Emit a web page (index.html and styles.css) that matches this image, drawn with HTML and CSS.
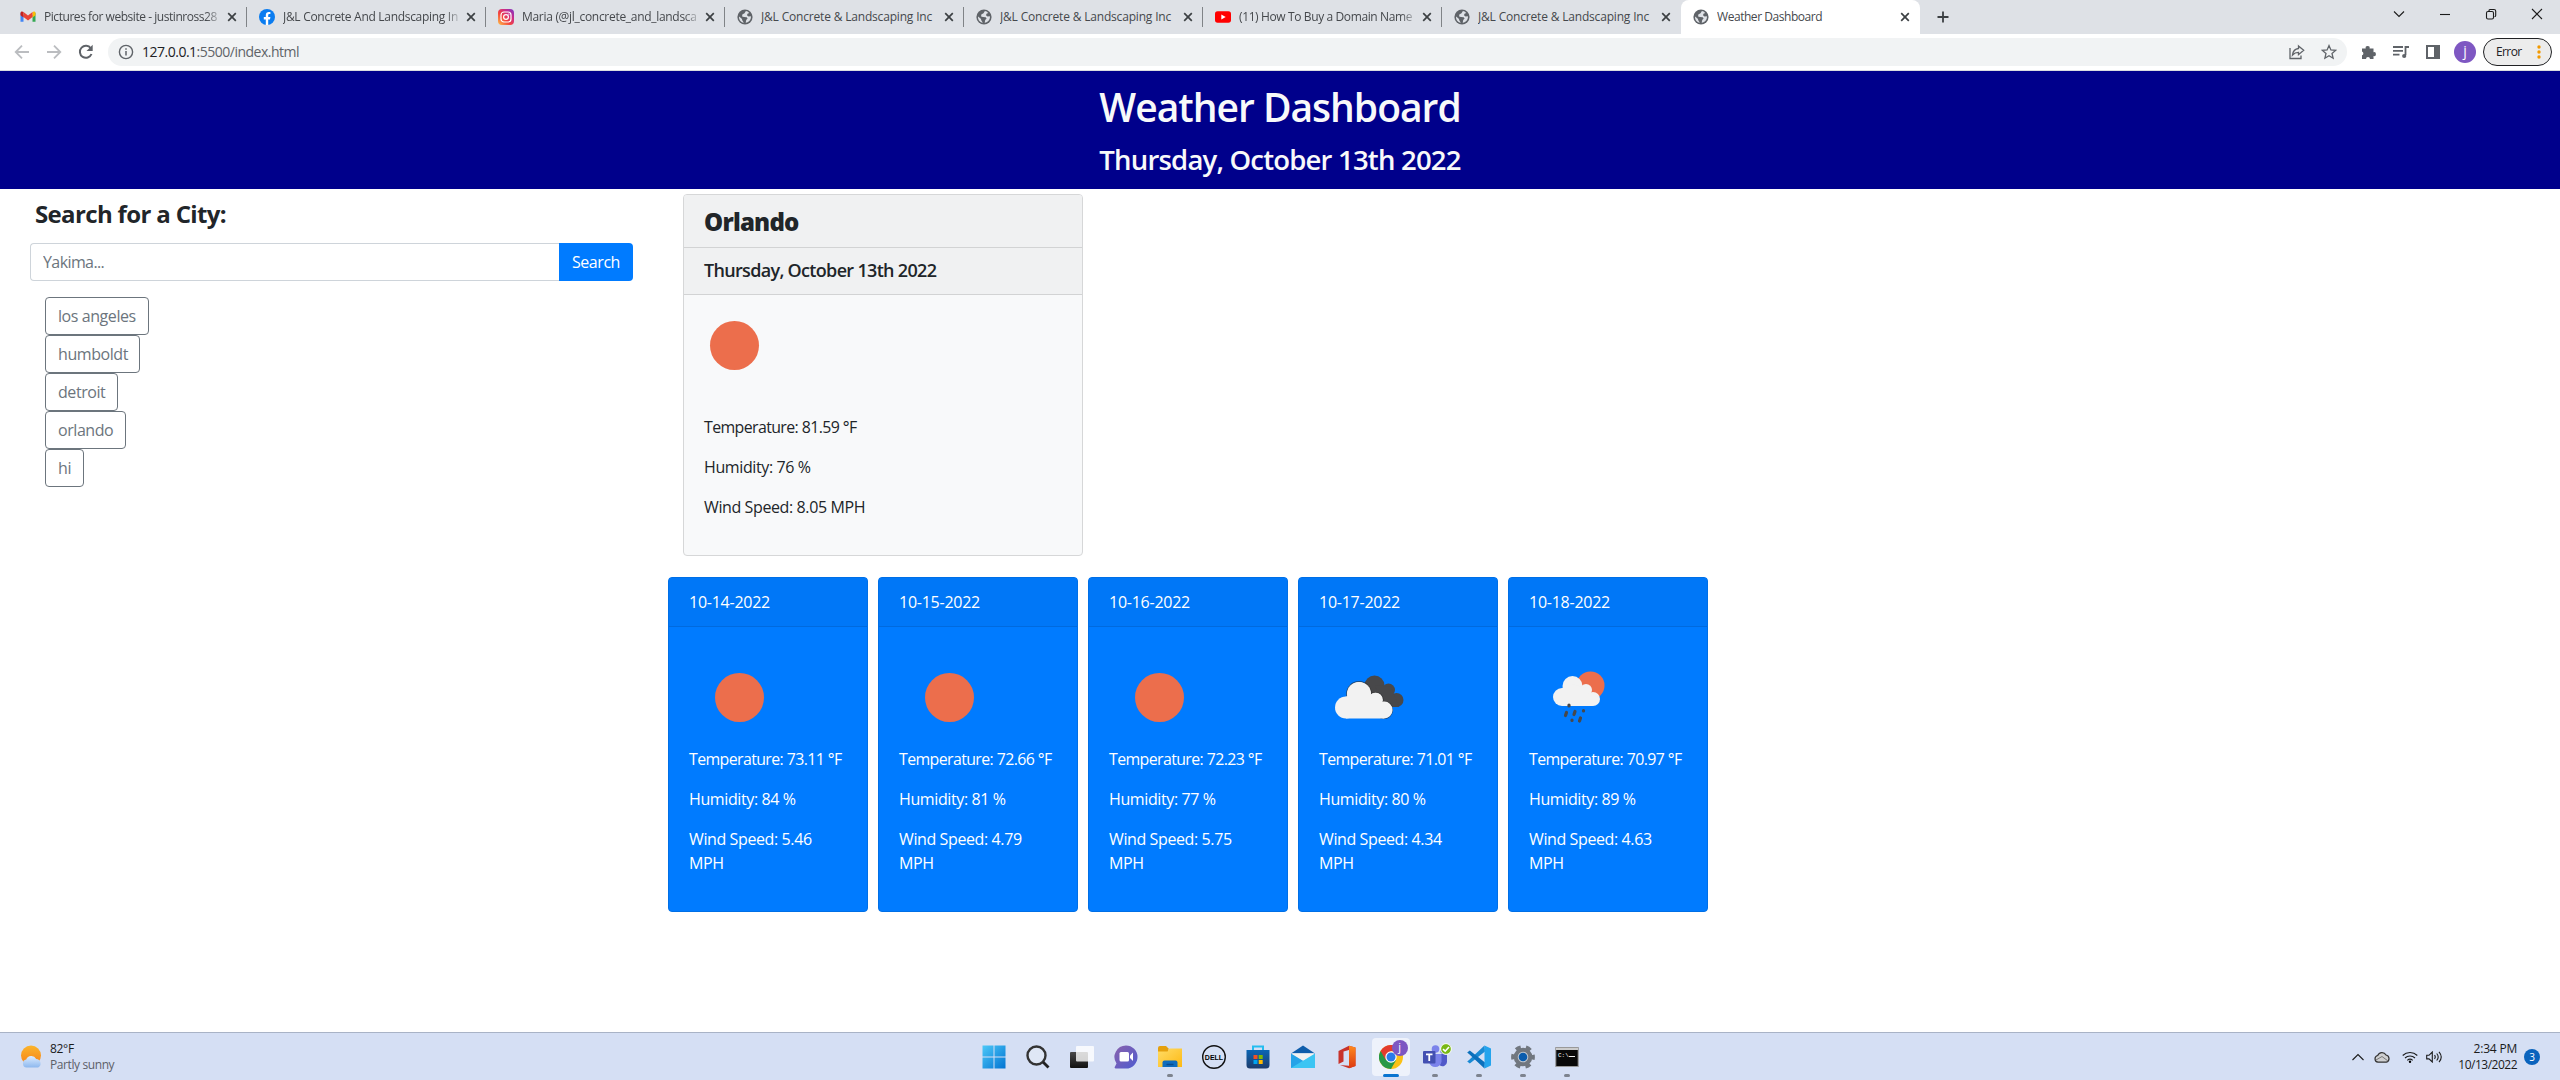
FILE: index.html
```html
<!DOCTYPE html>
<html lang="en">
<head>
<meta charset="utf-8">
<title>Weather Dashboard</title>
<link rel="stylesheet" href="styles.css">
</head>
<body>
<svg class="defs" width="0" height="0">
  <defs>
    <linearGradient id="win" x1="0" y1="0" x2="1" y2="1"><stop offset="0" stop-color="#4cc8f8"/><stop offset="1" stop-color="#0274d2"/></linearGradient>
    <linearGradient id="insta" x1="0" y1="1" x2="1" y2="0"><stop offset="0" stop-color="#fdc24a"/><stop offset=".4" stop-color="#f4443e"/><stop offset=".7" stop-color="#c92c8c"/><stop offset="1" stop-color="#7638c8"/></linearGradient>
    <linearGradient id="sunfill" x1="0" y1="0" x2="0" y2="1"><stop offset="0" stop-color="#fbb52c"/><stop offset="1" stop-color="#f57f17"/></linearGradient>
    <linearGradient id="cloudfill" x1="0" y1="0" x2="0" y2="1"><stop offset="0" stop-color="#dcecff"/><stop offset="1" stop-color="#8db8ee"/></linearGradient>
    <linearGradient id="folder" x1="0" y1="0" x2="1" y2="1"><stop offset="0" stop-color="#ffdc67"/><stop offset="1" stop-color="#fdb913"/></linearGradient>
    <linearGradient id="store" x1="0" y1="0" x2="0" y2="1"><stop offset="0" stop-color="#0a66b5"/><stop offset="1" stop-color="#1d3c6c"/></linearGradient>
    <linearGradient id="office" x1="0" y1="0" x2="0" y2="1"><stop offset="0" stop-color="#ff8a1d"/><stop offset="1" stop-color="#dc3912"/></linearGradient>
    <linearGradient id="chat" x1="0" y1="0" x2="1" y2="1"><stop offset="0" stop-color="#8a62ac"/><stop offset="1" stop-color="#4e5bd0"/></linearGradient>
    <linearGradient id="task" x1="0" y1="0" x2="0" y2="1"><stop offset="0" stop-color="#4a4a4a"/><stop offset="1" stop-color="#111"/></linearGradient>
    <symbol id="globe" viewBox="0 0 16 16"><circle cx="8" cy="8" r="7.600" fill="#5f6368"/><path d="M8.900 2.100 7.500 4.300 5.300 5.500 5.100 7.400 7 8 9.700 8.300 10.600 9.500 9.200 11 8.700 13.700C12.300 13.300 14.300 10.500 13.900 7.300L11.500 7.500 10 6.200 10.500 4.700 12.200 4.100C11.300 2.900 10.100 2.200 8.900 2.100zM2.100 7.500 4.800 9.800 5.400 11.500 6.800 13.700C3.500 13.200 1.600 10.400 2.100 7.500z" fill="#dee1e6"/></symbol>
    <symbol id="close" viewBox="0 0 10 10"><path d="M1.200 1.200 8.800 8.800M8.800 1.200 1.200 8.800" stroke="#3c4043" stroke-width="1.700"/></symbol>
  </defs>
</svg>

<div class="browser">
  <div class="tabs">
    <div class="tab"><svg class="fav" viewBox="0 0 16 16"><path d="M.5 3.500v9.300h3V6.500z" fill="#4285f4"/><path d="M15.500 3.500v9.300h-3V6.500z" fill="#34a853"/><path d="M12.500 4v4.500l3-2.300V4c0-1.500-1.700-2-3-1z" fill="#fbbc04"/><path d="M3.500 3 8 6.500 12.500 3v5L8 11.500 3.500 8z" fill="#ea4335"/><path d="M.5 4v2.200l3 2.300V3C2.200 2 .5 2.500.5 4z" fill="#c5221f"/></svg><span class="tab-title fade mail">Pictures for website - justinross28</span><svg class="x"><use href="#close"/></svg></div>
    <div class="tab"><svg class="fav" viewBox="0 0 16 16"><circle cx="8" cy="8" r="8" fill="#0a7cf0"/><path d="M6.800 16v-5.600h-2V8h2V6.300c0-2.100 1.200-3.200 3-3.200.8 0 1.600.1 1.600.1v1.900h-1c-.9 0-1.200.6-1.200 1.200V8h2.200l-.4 2.400H9.200V16z" fill="#fff"/></svg><span class="tab-title fade">J&amp;L Concrete And Landscaping Inc</span><svg class="x"><use href="#close"/></svg></div>
    <div class="tab"><svg class="fav" viewBox="0 0 16 16"><rect width="16" height="16" rx="4" fill="url(#insta)"/><rect x="3" y="3" width="10" height="10" rx="3" fill="none" stroke="#fff" stroke-width="1.200"/><circle cx="8" cy="8" r="2.400" fill="none" stroke="#fff" stroke-width="1.200"/><circle cx="10.900" cy="5.100" r=".7" fill="#fff"/></svg><span class="tab-title fade">Maria (@jl_concrete_and_landsca</span><svg class="x"><use href="#close"/></svg></div>
    <div class="tab"><svg class="fav"><use href="#globe"/></svg><span class="tab-title">J&amp;L Concrete &amp; Landscaping Inc</span><svg class="x"><use href="#close"/></svg></div>
    <div class="tab"><svg class="fav"><use href="#globe"/></svg><span class="tab-title">J&amp;L Concrete &amp; Landscaping Inc</span><svg class="x"><use href="#close"/></svg></div>
    <div class="tab"><svg class="fav" viewBox="0 0 16 16"><rect y="2.300" width="16" height="11.400" rx="2.600" fill="#f00"/><path d="M6.300 5.500v5L10.700 8z" fill="#fff"/></svg><span class="tab-title fade video">(11) How To Buy a Domain Name</span><svg class="x"><use href="#close"/></svg></div>
    <div class="tab last"><svg class="fav"><use href="#globe"/></svg><span class="tab-title">J&amp;L Concrete &amp; Landscaping Inc</span><svg class="x"><use href="#close"/></svg></div>
    <div class="tab active"><svg class="fav"><use href="#globe"/></svg><span class="tab-title">Weather Dashboard</span><svg class="x"><use href="#close"/></svg></div>
    <svg class="new-tab" viewBox="0 0 12 12"><path d="M6 .5v11M.5 6h11" stroke="#3c4043" stroke-width="1.800"/></svg>
    <div class="window-buttons">
      <svg viewBox="0 0 12 12"><path d="M1 3.500 6 8.500 11 3.500" class="w"/></svg>
      <svg viewBox="0 0 12 12"><path d="M1 6.500h10" class="w"/></svg>
      <svg viewBox="0 0 12 12"><rect x="1.500" y="3.500" width="7" height="7.500" rx="1.500" class="w"/><path d="M4 3V2.500Q4 1.500 5 1.500H9Q10.700 1.500 10.700 3V7.500Q10.700 8.700 9.500 8.700" class="w"/></svg>
      <svg viewBox="0 0 12 12"><path d="M1 1 11 11M11 1 1 11" class="w"/></svg>
    </div>
  </div>
  <div class="toolbar">
    <svg class="nav" viewBox="0 0 16 16"><path d="M15 8H2M8 1.700 1.700 8 8 14.300" stroke="#bbbdc0"/></svg>
    <svg class="nav" viewBox="0 0 16 16"><path d="M1 8h13M8 1.700 14.300 8 8 14.300" stroke="#bbbdc0"/></svg>
    <svg class="nav" viewBox="0 0 16 16"><path d="M13.500 10A6 6 0 1 1 12.800 4.300" stroke="#5f6368" stroke-width="2"/><path d="M14.700.8V7H8.500z" fill="#5f6368" stroke="none"/></svg>
    <div class="address">
      <svg class="info" viewBox="0 0 16 16"><circle cx="8" cy="8" r="6.600" fill="none" stroke="#5f6368" stroke-width="1.400"/><path d="M8 7v4.600M8 4.300v1.500" stroke="#5f6368" stroke-width="1.500"/></svg>
      <span class="url"><b>127.0.0.1</b>:5500/index.html</span>
      <svg class="share" viewBox="0 0 16 16"><path d="M1 4v10.500h11v-3M9.500 2 14.700 6.300 9.500 10.700V8.300C6.500 8.300 5 9.300 3.500 11 4 7 6 4.800 9.500 4.500z" class="t"/></svg>
      <svg class="star" viewBox="0 0 16 16"><path d="M8 1.600 9.900 6 14.600 6.400 11 9.500 12.100 14.200 8 11.700 3.900 14.200 5 9.500 1.400 6.400 6.100 6z" class="t"/></svg>
    </div>
    <div class="extensions">
      <svg viewBox="0 0 16 16"><path d="M1 4.500h3.700a2 2 0 1 1 3.900 0H12.500v3.700a2 2 0 1 1 0 3.900V15H9a2 2 0 0 0-4 0H1v-3.700a2 2 0 0 0 0-3.800z" fill="#5f6368"/></svg>
      <svg viewBox="0 0 16 16"><path d="M0 3h10M0 6.800h10M0 10.600h6.500M12.500 11V3h3.500" class="q"/><circle cx="11.200" cy="12" r="2.100" fill="#5f6368"/></svg>
      <svg viewBox="0 0 16 16"><path d="M1 1h14v14H1zM3 3v10h6V3z" fill="#5f6368" fill-rule="evenodd"/></svg>
      <span class="avatar">j</span>
      <span class="error">Error<svg viewBox="0 0 4 14"><circle cx="2" cy="2" r="1.700"/><circle cx="2" cy="7" r="1.700"/><circle cx="2" cy="12" r="1.700"/></svg></span>
    </div>
  </div>
</div>

<header class="hero">
  <h1>Weather Dashboard</h1>
  <h3>Thursday, October 13th 2022</h3>
</header>

<main class="page">
  <aside class="sidebar">
    <h2 class="search-title">Search for a City:</h2>
    <div class="search"><input type="text" placeholder="Yakima..."><button class="go">Search</button></div>
    <div class="history">
      <button class="b1">los angeles</button>
      <button class="b2">humboldt</button>
      <button class="b3">detroit</button>
      <button class="b4">orlando</button>
      <button class="b5">hi</button>
    </div>
  </aside>
  <section class="results">
    <article class="today">
      <h2 class="city">Orlando</h2>
      <h3 class="date">Thursday, October 13th 2022</h3>
      <div class="today-body">
        <svg class="weather" viewBox="0 0 100 100"><circle cx="50.500" cy="50.500" r="24.500" fill="#ec6e4c"/></svg>
        <p class="degrees">Temperature: 81.59 °F</p>
        <p>Humidity: 76 %</p>
        <p>Wind Speed: 8.05 MPH</p>
      </div>
    </article>
    <div class="forecast">
      <article class="day"><div class="day-head">10-14-2022</div><div class="day-body"><svg class="weather" viewBox="0 0 100 100"><circle cx="50.500" cy="50.500" r="24.500" fill="#ec6e4c"/></svg><p class="degrees">Temperature: 73.11 °F</p><p>Humidity: 84 %</p><p>Wind Speed: 5.46<br>MPH</p></div></article>
      <article class="day"><div class="day-head">10-15-2022</div><div class="day-body"><svg class="weather" viewBox="0 0 100 100"><circle cx="50.500" cy="50.500" r="24.500" fill="#ec6e4c"/></svg><p class="degrees">Temperature: 72.66 °F</p><p>Humidity: 81 %</p><p>Wind Speed: 4.79<br>MPH</p></div></article>
      <article class="day"><div class="day-head">10-16-2022</div><div class="day-body"><svg class="weather" viewBox="0 0 100 100"><circle cx="50.500" cy="50.500" r="24.500" fill="#ec6e4c"/></svg><p class="degrees">Temperature: 72.23 °F</p><p>Humidity: 77 %</p><p>Wind Speed: 5.75<br>MPH</p></div></article>
      <article class="day"><div class="day-head">10-17-2022</div><div class="day-body"><svg class="weather" viewBox="0 0 100 100">
        <g fill="#48484a"><circle cx="55.500" cy="38.500" r="10"/><circle cx="69.500" cy="43" r="6.500"/><circle cx="77.500" cy="53" r="7"/><path d="M56 38 72 40 80 60H62z"/></g>
        <g fill="#f2f2f2" stroke="#1f1f22" stroke-opacity=".6" stroke-width="1.200"><circle cx="40" cy="47" r="12.300"/><circle cx="56.500" cy="53" r="7.500"/><circle cx="65" cy="63" r="8.500"/></g>
        <g fill="#f2f2f2"><circle cx="40" cy="47" r="12"/><circle cx="56.500" cy="53" r="7.300"/><circle cx="27" cy="60.500" r="11"/><circle cx="65" cy="63" r="8.500"/><path d="M26 50 40 45 56 51 65 71.500H27z"/></g></svg><p class="degrees">Temperature: 71.01 °F</p><p>Humidity: 80 %</p><p>Wind Speed: 4.34<br>MPH</p></div></article>
      <article class="day"><div class="day-head">10-18-2022</div><div class="day-body"><svg class="weather" viewBox="0 0 100 100">
        <circle cx="61.500" cy="38.500" r="14" fill="#ec6e4c"/>
        <g fill="#f2f2f2"><circle cx="43.500" cy="39" r="10"/><circle cx="57" cy="43" r="6"/><circle cx="33" cy="50" r="9"/><circle cx="64" cy="52" r="7"/><path d="M33 41 43 37 57 41 64 59H33z"/></g>
        <path d="M40 58v1M37.500 65.500l-1 3M46 64.500l-1 3M54.500 63.500v.5M43 73v.5M51.500 71l-1 3" stroke="#48484a" stroke-width="3.200" stroke-linecap="round"/></svg><p class="degrees">Temperature: 70.97 °F</p><p>Humidity: 89 %</p><p>Wind Speed: 4.63<br>MPH</p></div></article>
    </div>
  </section>
</main>

<footer class="taskbar">
  <div class="widget">
    <svg viewBox="0 0 24 24"><circle cx="11" cy="10.500" r="10" fill="url(#sunfill)"/><path d="M6.500 22.500a4 4 0 0 1-.3-7.900 5.500 5.500 0 0 1 10-.7 4.600 4.600 0 0 1 2 8.600z" fill="url(#cloudfill)"/></svg>
    <div><div class="temp">82°F</div><div class="sky">Partly sunny</div></div>
  </div>
  <div class="apps">
    <span class="app"><svg viewBox="0 0 24 24"><path d="M.5.500h11v11H.5zM12.500.500h11v11h-11zM.5 12.500h11v11H.5zM12.500 12.500h11v11h-11z" fill="url(#win)"/></svg></span>
    <span class="app"><svg viewBox="0 0 24 24"><circle cx="10.500" cy="10.500" r="9" fill="#dfe7f5" stroke="#333" stroke-width="2.400"/><path d="M17 17l5.500 5.500" stroke="#222" stroke-width="2.800"/></svg></span>
    <span class="app"><svg viewBox="0 0 24 24"><rect y="7" width="18" height="16" rx="1" fill="url(#task)"/><rect x="6" y="1" width="18" height="15.500" rx="1" fill="#fff" fill-opacity=".8"/></svg></span>
    <span class="app"><svg viewBox="0 0 24 24"><path d="M12 .5A11.500 11.500 0 1 1 12 23.500H1.500q-1.500-.5-.5-2l1.500-3A11.500 11.500 0 0 1 12 .500z" fill="url(#chat)"/><rect x="5.500" y="7" width="9.500" height="9.500" rx="1.500" fill="#fff"/><path d="M16 10.500 19 7.500V16L16 13z" fill="#fff"/></svg></span>
    <span class="app"><svg viewBox="0 0 24 24"><path d="M0 3q0-2 2-2h6l2.500 2.500V8H0z" fill="#e5a00d"/><path d="M0 6.500h9.500l2-3H24V22H0z" fill="url(#folder)"/><path d="M4.500 22v-4.500q0-2 2-2h11q2 0 2 2V22z" fill="#0f6cbd"/><path d="M8.500 19.500h7" stroke="#094b8c" stroke-width="1.500"/></svg><i></i></span>
    <span class="app"><svg viewBox="0 0 24 24"><circle cx="12" cy="12" r="11.300" fill="none" stroke="#111" stroke-width="1.400"/><text x="12" y="14.700" text-anchor="middle" class="dell">DELL</text></svg></span>
    <span class="app"><svg viewBox="0 0 24 24"><path d="M7 6V1.500h10V6" fill="none" stroke="#25bdf0" stroke-width="2"/><path d="M.5 5h23v15q0 3.500-3.500 3.500H4Q.5 23.500.5 20z" fill="url(#store)"/><path d="M7.500 10h4v4h-4z" fill="#f25022"/><path d="M12.700 10h4v4h-4z" fill="#7fba00"/><path d="M7.500 15h4v4h-4z" fill="#00a4ef"/><path d="M12.700 15h4v4h-4z" fill="#ffb900"/></svg></span>
    <span class="app"><svg viewBox="0 0 24 24"><path d="M0 8.500 12 .500 24 8.500z" fill="#0f5dab"/><path d="M1 8.500h22V20H1z" fill="#f2f2f2"/><path d="M0 8.500v14.500h24z" fill="#25a3e8"/><path d="M24 8.500v14.500H0z" fill="#3cc5f3"/><path d="M1 8.500h22L12 15.300z" fill="#f2f2f2"/></svg></span>
    <span class="app"><svg viewBox="0 0 24 24"><path d="M14 .800 20.500 2.500v18.500L14 23.200 5 20 14 20.700V5L8.500 6.500v10L3.500 19V6z" fill="#c8332b"/><path d="M14 .800 20.500 2.500v18.500L14 23.200z" fill="url(#office)"/></svg></span>
    <span class="app current"><svg viewBox="0 0 24 24"><circle cx="12" cy="12" r="12" fill="#fbc116"/><path d="M12 12 1.600 6A12 12 0 0 0 12 24l5-8.700z" fill="#279847"/><path d="M1.600 6A12 12 0 0 1 22.400 6H12L6.800 15z" fill="#e33b2e"/><circle cx="12" cy="12" r="5.700" fill="#fff"/><circle cx="12" cy="12" r="4.500" fill="#2a7be9"/></svg><b class="profile">j</b><i></i></span>
    <span class="app"><svg viewBox="0 0 24 24"><circle cx="12.500" cy="4" r="3.800" fill="#7b83eb"/><circle cx="20" cy="6" r="2.700" fill="#5059c9"/><path d="M15 9h9v8a4.500 4.500 0 0 1-7 3.500z" fill="#5059c9"/><path d="M6 9h12.500v7.500a6.300 6.300 0 0 1-12.500 0z" fill="#7b83eb"/><rect x="0" y="6" width="12.500" height="12.500" rx="1" fill="#4350b2"/><path d="M3 9.300h6.500M6.250 9v7" stroke="#fff" stroke-width="1.800"/></svg><svg class="status" viewBox="0 0 12 12"><circle cx="6" cy="6" r="5.400" fill="#79b816" stroke="#fff"/><path d="M3 6.200 5.200 8.200 9 4" fill="none" stroke="#fff" stroke-width="1.600"/></svg><i></i></span>
    <span class="app"><svg viewBox="0 0 24 24"><path d="M17.500.500 2 15 .200 16.500 2.800 18.500 18 6.500z" fill="#1a8ad4"/><path d="M17.500 23.500 2 9 .200 7.500 2.800 5.500 18 17.500z" fill="#0b70bc"/><path d="M17.500.500 24 3.500v17l-6.500 3z" fill="#24a4ed"/></svg><i></i></span>
    <span class="app"><svg viewBox="0 0 24 24"><circle cx="12" cy="12" r="9.600" fill="none" stroke="#71777f" stroke-width="4.600" stroke-dasharray="5.030 5.030" stroke-dashoffset="2.500"/><circle cx="12" cy="12" r="7.300" fill="#c2c8d0" stroke="#71777f" stroke-width="4"/><circle cx="12" cy="12" r="4.300" fill="#0a5cad"/></svg><i></i></span>
    <span class="app"><svg viewBox="0 0 24 24"><rect x=".8" y="2.500" width="22.400" height="19" fill="#090909" stroke="#999" stroke-width="1"/><path d="M1 4h22" stroke="#ccc" stroke-width="2"/><path d="M14 11.500h6" stroke="#eee" stroke-width="1"/><text x="3" y="11.500" class="cmd">C:\</text></svg><i></i></span>
  </div>
  <div class="tray">
    <svg class="up" viewBox="0 0 12 12"><path d="M.5 9 6 3.500 11.500 9" class="w"/></svg>
    <svg class="cloud" viewBox="0 0 16 12"><path d="M4 11.200a3.400 3.400 0 0 1-.3-6.700A4.600 4.600 0 0 1 12 4a3.700 3.700 0 0 1 .3 7.200z" fill="#cfd0d2" stroke="#333" stroke-width="1.200"/><path d="M2 9 8 5.500 14 10" fill="none" stroke="#777" stroke-width="1"/></svg>
    <svg class="wifi" viewBox="0 0 16 12"><path d="M.7 4.500a10.500 10.500 0 0 1 14.600 0M3 7a7.200 7.200 0 0 1 10 0M5.300 9.300a4 4 0 0 1 5.400 0" class="w"/><circle cx="8" cy="10.800" r="1.200"/></svg>
    <svg class="volume" viewBox="0 0 16 12"><path d="M.7 4.300v3.600H3L6.300 11V1L3 4.300zM8.500 4.200q1.500 1.900 0 3.700M10.700 2.500q3 3.500 0 7M13 .800q4.500 5.200 0 10.400" class="w"/></svg>
    <div class="clock"><div class="time">2:34 PM</div><div class="day-date">10/13/2022</div></div>
    <span class="count">3</span>
  </div>
</footer>
</body>
</html>
```
FILE: styles.css
```css
* { box-sizing: border-box; }
body {
  margin: 0;
  height: 1080px;
  display: flex;
  flex-direction: column;
  overflow: hidden;
  background: #fff;
  color: #212529;
  font: 16px/24px "Open Sans", "Noto Sans", sans-serif;
}
h1, h2, h3, p { margin: 0; }
svg { flex: none; display: block; }
.defs { position: absolute; }
.w { fill: none; stroke: #1b1b1b; stroke-width: 1.1; }
.t { fill: none; stroke: #5f6368; stroke-width: 1.3; }
.q { fill: none; stroke: #5f6368; stroke-width: 1.8; }

/* Browser chrome */
.browser { flex: none; height: 71px; border-bottom: 1px solid #dadce0; background: #fff; }
.tabs { display: flex; align-items: center; height: 34px; padding-left: 8px; background: #dee1e6; }
.tab {
  flex: none;
  display: flex;
  align-items: center;
  width: 239px;
  height: 20px;
  padding: 0 9px 0 12px;
  border-right: 1px solid #808387;
  color: #45484c;
  font-size: 12px;
  line-height: 20px;
  letter-spacing: -.18px;
}
.tab.last { border-color: transparent; }
.tab.active { height: 34px; border: 0; border-radius: 8px 8px 0 0; background: #fff; padding-right: 10px; letter-spacing: -.45px; }
.fav { width: 16px; height: 16px; }
.tab-title { flex: 1; margin: 0 8px; overflow: hidden; white-space: nowrap; }
.fade { letter-spacing: -.3px; mask-image: linear-gradient(to right, #000 162px, transparent 180px); }
.mail { letter-spacing: -.45px; }
.video { letter-spacing: -.38px; }
.x { width: 10px; height: 10px; }
.new-tab { width: 12px; height: 12px; margin-left: 17px; }
.window-buttons { display: flex; gap: 34px; margin: -6px 17px 0 auto; }
.window-buttons svg { width: 12px; height: 12px; }
.toolbar { display: flex; align-items: center; height: 36px; padding: 0 8px 0 14px; }
.nav { width: 16px; height: 16px; margin-right: 16px; fill: none; stroke-width: 1.8; }
.address {
  flex: 1;
  display: flex;
  align-items: center;
  height: 28px;
  margin-left: -2px;
  padding: 0 10px;
  border-radius: 14px;
  background: #f1f3f4;
}
.info { width: 16px; height: 16px; }
.url { flex: 1; margin-left: 8px; color: #5f6368; font-size: 14px; line-height: 28px; letter-spacing: -.5px; }
.url b { color: #202124; font-weight: 400; }
.share, .star { width: 16px; height: 16px; margin-left: 16px; }
.extensions { display: flex; align-items: center; gap: 16px; margin-left: 14px; }
.extensions > svg { width: 16px; height: 16px; }
.avatar {
  width: 22px; height: 22px; margin: 0 -3px 0 -3px;
  border-radius: 50%; background: #7e57c2; color: #fff;
  font-size: 14px; line-height: 19px; text-align: center;
}
.error {
  display: flex; align-items: center; justify-content: space-between;
  width: 69px; height: 28px; margin-left: -6px; padding: 0 10px 0 12px;
  border: 1px solid #202124; border-radius: 14px; background: #ececec;
  color: #202124; font-size: 12px; letter-spacing: -.6px;
}
.error svg { width: 4px; height: 14px; fill: #f29900; }

/* Page heading */
.hero { flex: none; height: 118px; padding-top: 12px; background: #00008b; color: #f8f9fa; text-align: center; }
.hero h1 { font-size: 39px; line-height: 48px; font-weight: 600; letter-spacing: -1px; }
.hero h3 { margin-top: 12px; font-size: 27.5px; line-height: 34px; font-weight: 600; letter-spacing: -.8px; }

/* Page content */
.page { flex: 1; display: flex; }
.sidebar { width: 668px; padding: 10px 35px 0 30px; }
.search-title { margin-left: 5px; font-size: 24px; line-height: 29px; font-weight: 700; letter-spacing: -.65px; }
.search { display: flex; height: 38px; margin-top: 15px; }
.search input {
  flex: 1; padding: 0 12px; border: 1px solid #ced4da; border-right: 0;
  border-radius: 4px 0 0 4px; font: inherit; color: #495057;
}
.search input::placeholder { color: #6c757d; letter-spacing: -.6px; }
.go {
  width: 74px; padding: 0; border: 0; border-radius: 0 4px 4px 0;
  background: #007bff; color: #fff; font: inherit; letter-spacing: -.45px;
}
.history { display: flex; flex-direction: column; align-items: flex-start; margin: 16px 0 0 15px; }
.history button {
  height: 38px; padding: 0 0 0 12px; border: 1px solid #6c757d; border-radius: 4px;
  background: #fff; color: #6c757d; font: inherit; letter-spacing: -.43px; text-align: left;
}
.b1 { width: 104px; }
.b2 { width: 95px; }
.b3 { width: 73px; }
.b4 { width: 81px; }
.b5 { width: 39px; }
.results { flex: 1; }
.today {
  width: 400px; height: 362px; margin: 5px 0 0 15px; overflow: hidden;
  border: 1px solid #d6d7d8; border-radius: 4px; background: #f8f9fa;
}
.city, .date { padding: 0 20px; border-bottom: 1px solid #d2d3d4; background: #f0f1f2; }
.city { height: 53px; font-size: 24px; line-height: 54px; font-weight: 800; letter-spacing: -.75px; }
.date { height: 47px; font-size: 18px; line-height: 45px; font-weight: 600; letter-spacing: -.68px; }
.today-body { padding: 0 20px; }
.today-body .weather { margin-left: -20px; }
.weather { width: 100px; height: 100px; }
.today-body p, .day-body p { margin-bottom: 16px; white-space: nowrap; letter-spacing: -.39px; }
.today-body .degrees, .day-body .degrees { letter-spacing: -.6px; font-size: 15.9px; }
.today-body .weather + p { margin-top: 20px; }
.forecast { display: flex; gap: 10px; margin-top: 21px; }
.day { width: 200px; height: 335px; border: 1px solid #006fe6; border-radius: 4px; background: #007bff; color: #fff; }
.day-head { height: 49px; padding: 12px 20px; border-bottom: 1px solid #006ade; background: #0077f7; letter-spacing: -.25px; }
.day-body { padding: 20px 20px 0; }
.day-body .weather + p { margin-top: 0; }

/* Taskbar */
.taskbar {
  flex: none; display: grid; grid-template-columns: 1fr auto 1fr; align-items: center;
  height: 48px; border-top: 1px solid #a9b3c6; background: #d5dff4;
  font-size: 12px; line-height: 16px; color: #1b1b1b;
}
.widget { display: flex; align-items: center; gap: 6px; padding-left: 20px; }
.widget svg { width: 24px; height: 24px; }
.temp { letter-spacing: -.3px; }
.sky { color: #5c6068; letter-spacing: -.4px; }
.apps { display: flex; gap: 6px; padding-left: 1px; }
.app { position: relative; width: 38.1px; height: 38px; padding: 7px; border-radius: 4px; }
.app svg { width: 24px; height: 24px; }
.app i { position: absolute; left: 16px; bottom: -1px; width: 6px; height: 3px; border-radius: 2px; background: #7d838e; }
.current { background: #eef2fb; }
.app.current i { left: 11px; width: 16px; background: #0a74d0; }
.profile {
  position: absolute; left: 20px; top: 2px; width: 16px; height: 16px; border-radius: 50%;
  background: #7e57c2; color: #fff; font-size: 11px; font-weight: 400; line-height: 14px; text-align: center;
}
.app .status { position: absolute; left: 24px; top: 5px; width: 12px; height: 12px; }
.dell { font: 700 7px "Liberation Sans", sans-serif; }
.cmd { font: 6px "Liberation Mono", monospace; fill: #fff; }
.tray { display: flex; align-items: center; justify-content: flex-end; padding-right: 20px; }
.up { width: 12px; height: 12px; margin-right: 10px; }
.cloud { width: 16px; height: 12px; margin-right: 12px; }
.wifi { width: 16px; height: 12px; margin-right: 8px; }
.volume { width: 16px; height: 12px; }
.clock { width: 75px; text-align: right; }
.day-date { letter-spacing: -.5px; }
.time { letter-spacing: -.2px; }
.count { width: 16px; height: 16px; margin-left: 7px; border-radius: 50%; background: #0a63bd; color: #fff; font-size: 10px; text-align: center; }
```
